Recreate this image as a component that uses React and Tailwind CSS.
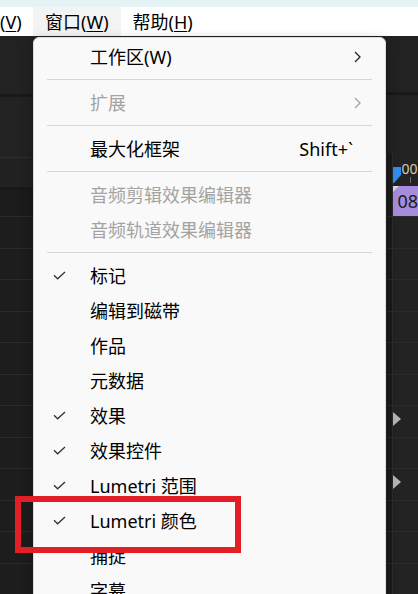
import React from 'react';

const FONT = { fontFamily: '"Noto Sans", "Noto Sans CJK SC", sans-serif' };

const Check = () => (
  <svg width="13" height="9" viewBox="0 0 13 9" className="block">
    <polyline points="1,4.2 4.6,7.8 12,1" fill="none" stroke="#333" strokeWidth="1.3" />
  </svg>
);

const Chevron = ({ color }) => (
  <svg width="7" height="12" viewBox="0 0 7 12" className="block">
    <polyline points="1,1 6,6 1,11" fill="none" stroke={color} strokeWidth="1.3" />
  </svg>
);

const items = [
  { label: '工作区(W)', sub: true },
  { sep: true },
  { label: '扩展', sub: true, disabled: true },
  { sep: true },
  { label: '最大化框架', shortcut: 'Shift+`' },
  { sep: true },
  { label: '音频剪辑效果编辑器', disabled: true },
  { label: '音频轨道效果编辑器', disabled: true },
  { sep: true },
  { label: '标记', checked: true },
  { label: '编辑到磁带' },
  { label: '作品' },
  { label: '元数据' },
  { label: '效果', checked: true },
  { label: '效果控件', checked: true },
  { label: 'Lumetri 范围', checked: true },
  { label: 'Lumetri 颜色', checked: true },
  { label: '捕捉' },
  { label: '字幕' },
];

const MenuRow = ({ item }) => {
  if (item.sep) {
    return (
      <div className="h-[11px] flex items-center mx-[13px]">
        <div className="h-px w-full bg-[#d6d6d6]" />
      </div>
    );
  }
  return (
    <div className="h-[35px] flex items-center">
      <div className="w-[56px] pl-[19px] flex items-center">{item.checked && <Check />}</div>
      <div className={`flex-1 text-[18px] leading-none whitespace-nowrap ${item.disabled ? 'text-[#a3a3a3]' : 'text-black'}`}>
        {item.label}
      </div>
      {item.shortcut && <div className="text-[18px] leading-none text-black pr-[32px]">{item.shortcut}</div>}
      {item.sub && (
        <div className="pr-[24px]">
          <Chevron color={item.disabled ? '#a3a3a3' : '#222'} />
        </div>
      )}
    </div>
  );
};

const RowLines = ({ count, bg = 'bg-[#1d1d1d]' }) => (
  <div className={`flex flex-col ${bg}`}>
    {Array.from({ length: count }).map((_, i) => (
      <div key={i} className="h-[31.5px] border-t border-[#2b2b2b] shrink-0" />
    ))}
  </div>
);

export default function App() {
  return (
    <div className="relative w-[418px] h-[594px] overflow-hidden bg-[#232323] flex flex-col" style={FONT}>
      <div className="h-[7px] bg-[#e4f3f6] shrink-0" />
      <div className="h-[29px] bg-white flex items-center text-[18px] leading-none text-black shrink-0">
        <div className="w-[33px] h-full flex items-center">
          (<span className="underline underline-offset-2">V</span>)
        </div>
        <div className="h-full px-[12px] flex items-center bg-[#f3f3f3]">
          窗口(<span className="underline underline-offset-2">W</span>)
        </div>
        <div className="h-full px-[12px] flex items-center">
          帮助(<span className="underline underline-offset-2">H</span>)
        </div>
      </div>

      <div className="flex-1 flex min-h-0">
        <div className="w-[33px] flex flex-col">
          <div className="h-[61px] bg-[#222222]" />
          <div className="h-[3px] bg-[#191919]" />
          <div className="h-[63px] bg-[#222222]" />
          <div className="h-[32px] bg-[#212121] border-t border-[#2d2d2d]" />
          <div className="h-[3px] bg-[#191919]" />
          <div className="h-[27px] bg-[#1b1b1b]" />
          <RowLines count={12} />
        </div>

        <div className="flex-1 bg-[#232323]" />

        <div className="w-[32px] flex flex-col">
          <div className="h-[61px] bg-[#222222]" />
          <div className="h-[3px] bg-[#191919]" />
          <div className="h-[63px] bg-[#222222]" />
          <div className="flex-1 flex">
            <div className="w-[10px] bg-[#1b1b1b] border-x border-[#2c2c2c] flex flex-col">
              <div className="h-[63px]" />
              <RowLines count={12} bg="bg-[#1b1b1b]" />
            </div>
            <div className="flex-1 flex flex-col">
              <div className="h-[33px] relative bg-[#232323]">
                <svg width="8" height="16" viewBox="0 0 8 16" className="absolute left-0 top-[14px]">
                  <path d="M0 0 H8 V8 L1 16 H0 Z" fill="#2f8ef0" />
                </svg>
                <span className="absolute left-[8px] top-[9px] text-[14px] leading-none text-[#d8c9a8]">00</span>
                <div className="absolute left-[17px] top-[24px] w-px h-[6px] bg-[#6a6a6a]" />
              </div>
              <div className="h-[30px] bg-[#a58ddc] relative flex items-center pl-[4px] text-[18px] leading-none text-[#1c1c1c]">
                <svg width="6" height="6" viewBox="0 0 6 6" className="absolute left-0 top-0">
                  <path d="M0 0 H6 L0 6 Z" fill="#d9d9d9" />
                </svg>
                08
              </div>
              <div className="flex flex-col bg-[#232323]">
                {Array.from({ length: 12 }).map((_, i) => (
                  <div key={i} className="h-[31.5px] border-t border-[#2b2b2b] shrink-0 relative">
                    {(i === 6 || i === 8) && (
                      <svg width="8" height="14" viewBox="0 0 8 14" className="absolute left-0 top-[6px]">
                        <path d="M0 0 L8 7 L0 14 Z" fill="#b4b4b4" />
                      </svg>
                    )}
                  </div>
                ))}
              </div>
            </div>
          </div>
        </div>
      </div>

      <div className="absolute left-[33px] top-[37px] w-[353px] h-[600px] bg-[#f9f9f9] border border-[#dcdcdc] rounded-t-[6px] shadow-[0_4px_12px_rgba(0,0,0,0.35)] pt-[1px]">
        {items.map((item, i) => (
          <MenuRow key={i} item={item} />
        ))}
      </div>

      <div className="absolute left-[15px] top-[496px] w-[226px] h-[57px] border-[6px] border-[#e31e24]" />
    </div>
  );
}
